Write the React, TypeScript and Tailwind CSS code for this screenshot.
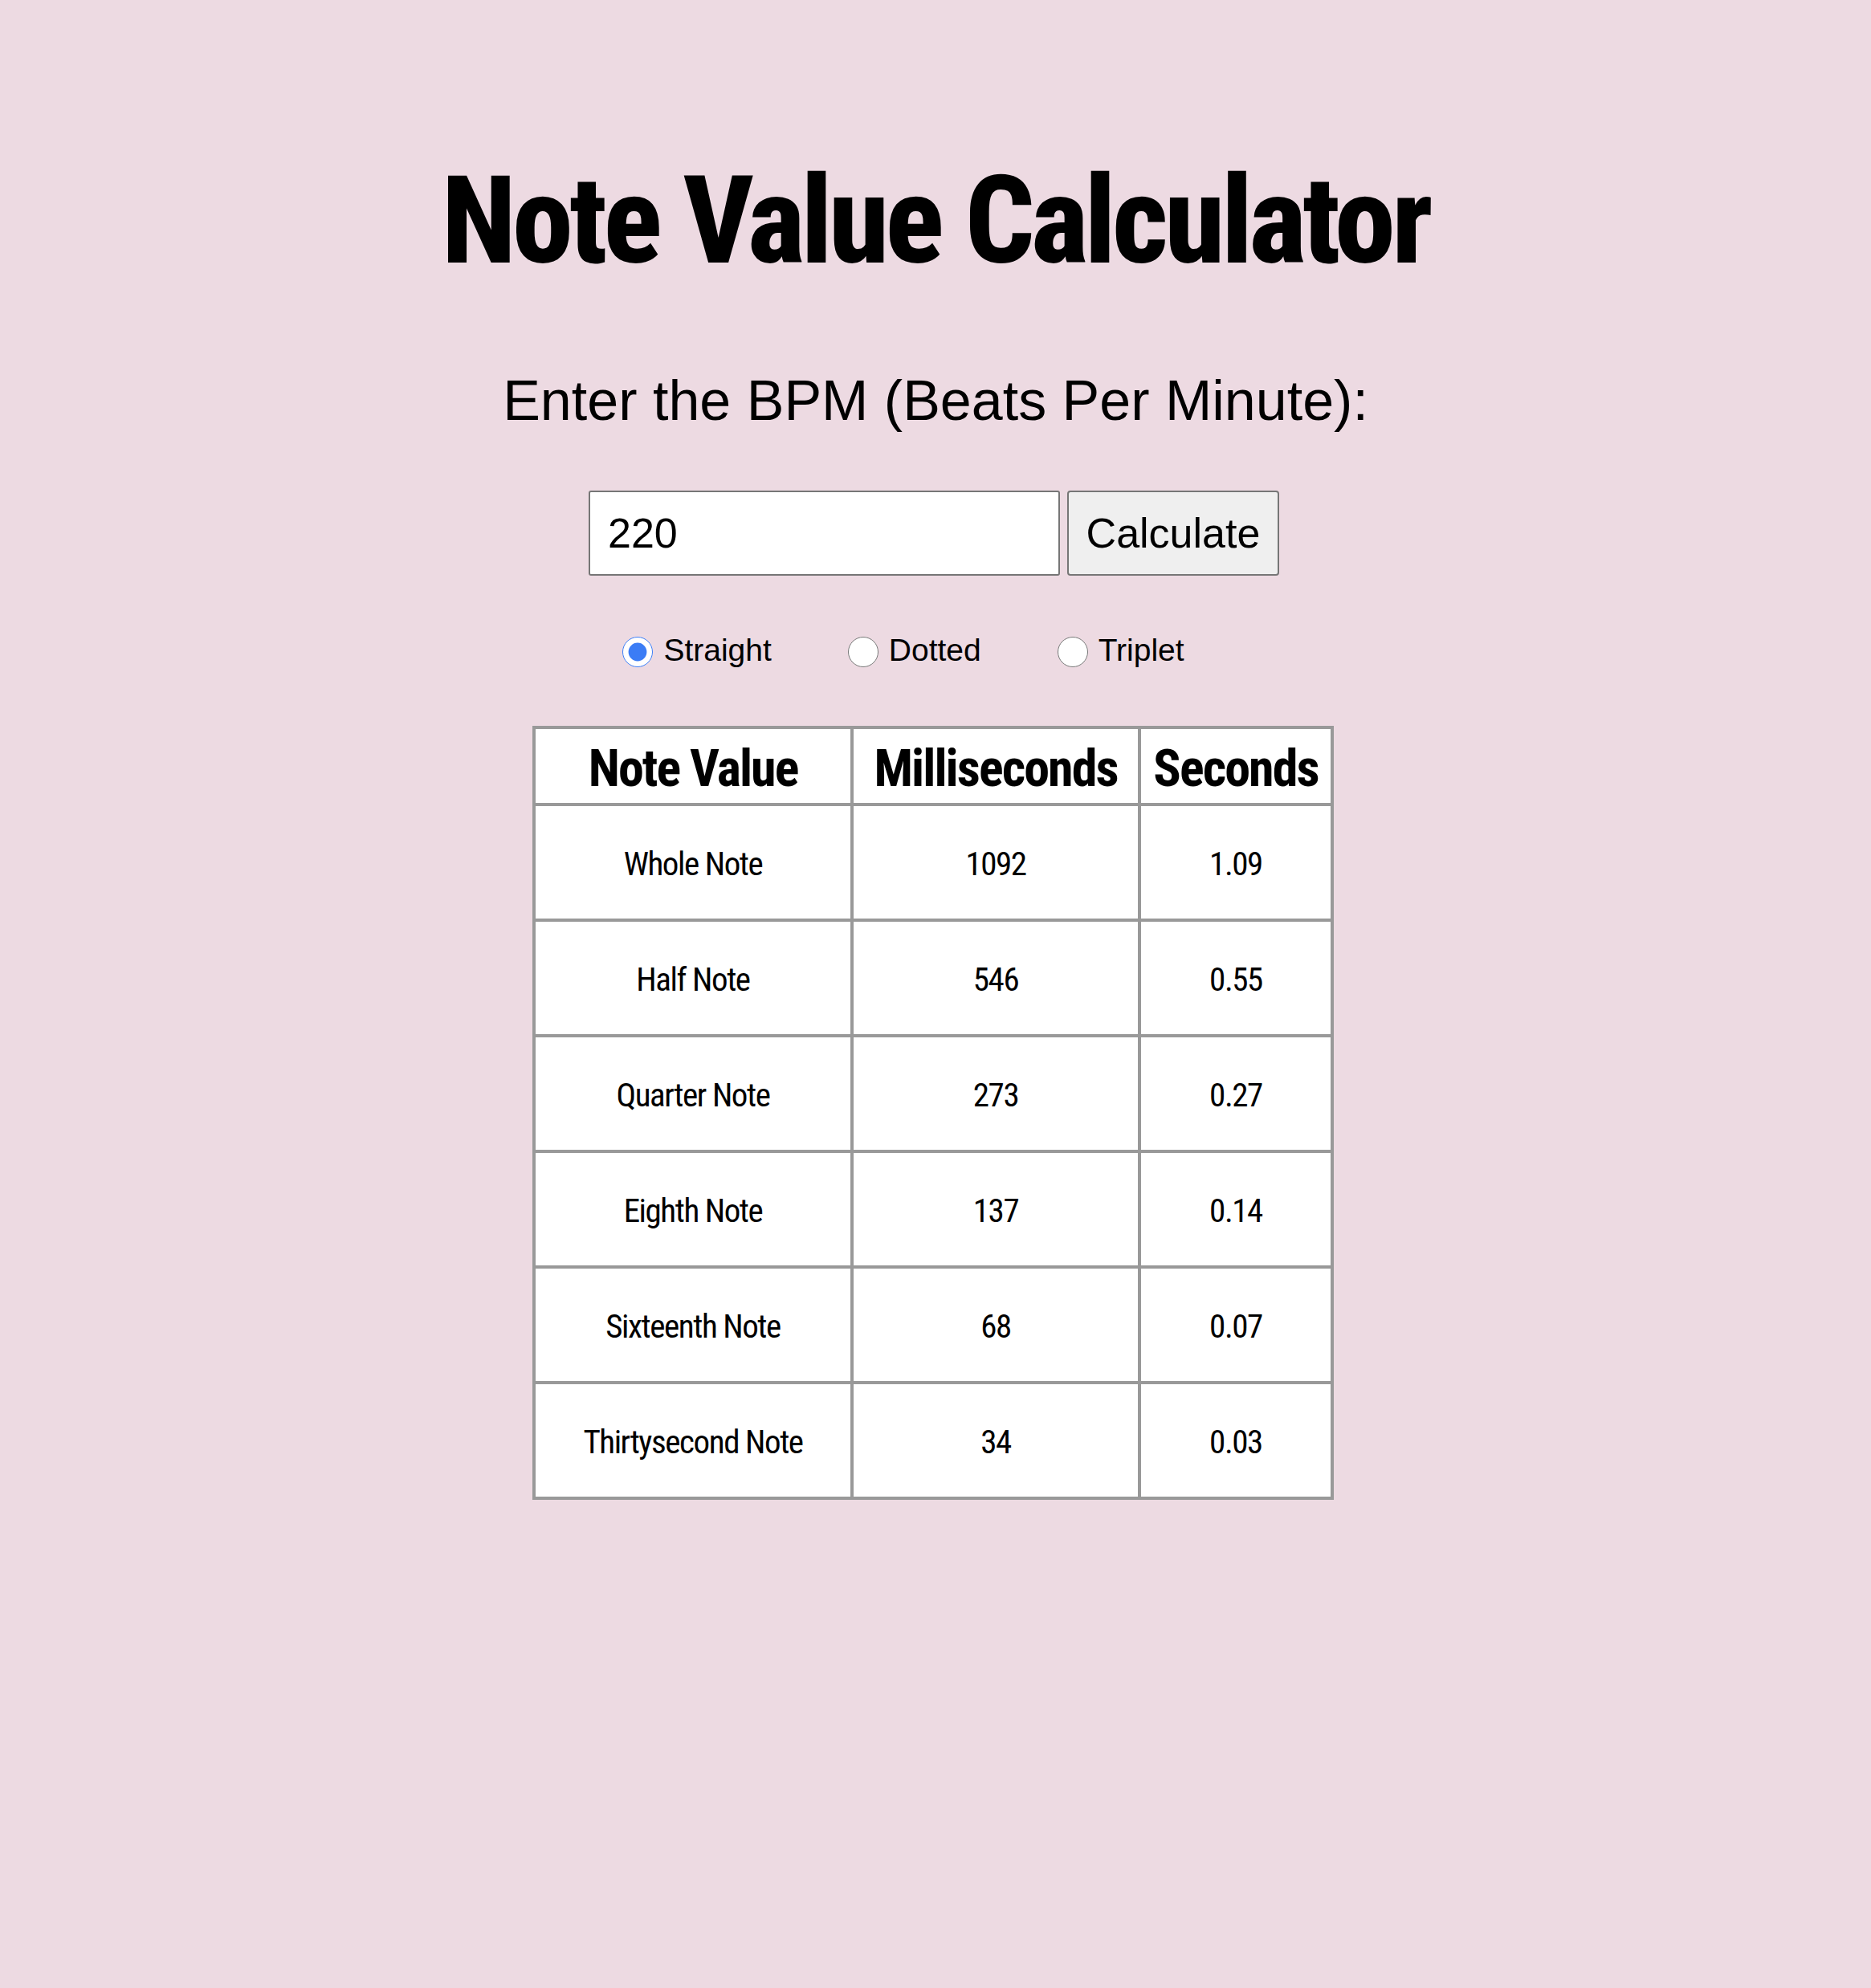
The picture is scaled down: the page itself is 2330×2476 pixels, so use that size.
import { useState } from 'react';

const ROWS = [
  { name: 'Whole Note', ms: '1092', sec: '1.09' },
  { name: 'Half Note', ms: '546', sec: '0.55' },
  { name: 'Quarter Note', ms: '273', sec: '0.27' },
  { name: 'Eighth Note', ms: '137', sec: '0.14' },
  { name: 'Sixteenth Note', ms: '68', sec: '0.07' },
  { name: 'Thirtysecond Note', ms: '34', sec: '0.03' },
];

const MODES = ['Straight', 'Dotted', 'Triplet'];

export default function App() {
  const [bpm, setBpm] = useState('220');
  const [mode, setMode] = useState('Straight');

  return (
    <div className="min-h-screen bg-[#eddae2] flex flex-col items-center font-['Liberation_Sans',Arial,sans-serif] text-black">
      {/* Title */}
      <h1 className="mt-[190px] h-[170px] leading-[170px] text-[152px] font-extrabold tracking-[-0.03em] font-['Roboto',sans-serif] font-stretch-75%">
        Note Value Calculator
      </h1>

      <p className="mt-[100px] text-[70px] leading-[79px]">Enter the BPM (Beats Per Minute):</p>

      {/* BPM input */}
      <div className="mt-[72px] flex gap-[9px] ml-[-4px]">
        <input
          type="text"
          value={bpm}
          onChange={(e) => setBpm(e.target.value)}
          className="w-[587px] h-[106px] bg-white border-2 border-[#767676] rounded-[3px] pl-[22px] text-[52px] outline-none"
        />
        <button className="w-[264px] h-[106px] bg-[#efefef] border-2 border-[#767676] rounded-[4px] text-[52px]">
          Calculate
        </button>
      </div>

      {/* Note type */}
      <div className="mt-[70px] h-[45px] flex items-center gap-[95px] pr-[80px]">
        {MODES.map((m) => (
          <label key={m} className="flex items-center gap-[13px] text-[39px] leading-[45px]">
            <input
              type="radio"
              name="mode"
              checked={mode === m}
              onChange={() => setMode(m)}
              className="w-[38px] h-[38px] m-0 mt-[4px] accent-[#3b7cf5]"
            />
            {m}
          </label>
        ))}
      </div>

      {/* Results table */}
      <table className="mt-[72px] ml-[-6px] w-[998px] table-fixed border-collapse border-[4px] border-[#999] bg-white leading-none font-['Roboto',sans-serif] font-stretch-75%">
        <thead>
          <tr className="h-[96px]">
            <th className="w-[396px] p-0 pt-[8px] border-[4px] border-[#999] text-[64px] font-bold tracking-[-0.03em]">Note Value</th>
            <th className="w-[358px] p-0 pt-[8px] border-[4px] border-[#999] text-[64px] font-bold tracking-[-0.03em]">Milliseconds</th>
            <th className="w-[240px] p-0 pt-[8px] border-[4px] border-[#999] text-[64px] font-bold tracking-[-0.03em]">Seconds</th>
          </tr>
        </thead>
        <tbody>
          {ROWS.map((row) => (
            <tr key={row.name} className="h-[144px]">
              <td className="p-0 pt-[4px] border-[4px] border-[#999] text-center text-[41px] font-[450] tracking-[-0.035em]">{row.name}</td>
              <td className="p-0 pt-[4px] border-[4px] border-[#999] text-center text-[41px] font-[450] tracking-[-0.035em]">{row.ms}</td>
              <td className="p-0 pt-[4px] border-[4px] border-[#999] text-center text-[41px] font-[450] tracking-[-0.035em]">{row.sec}</td>
            </tr>
          ))}
        </tbody>
      </table>
    </div>
  );
}
